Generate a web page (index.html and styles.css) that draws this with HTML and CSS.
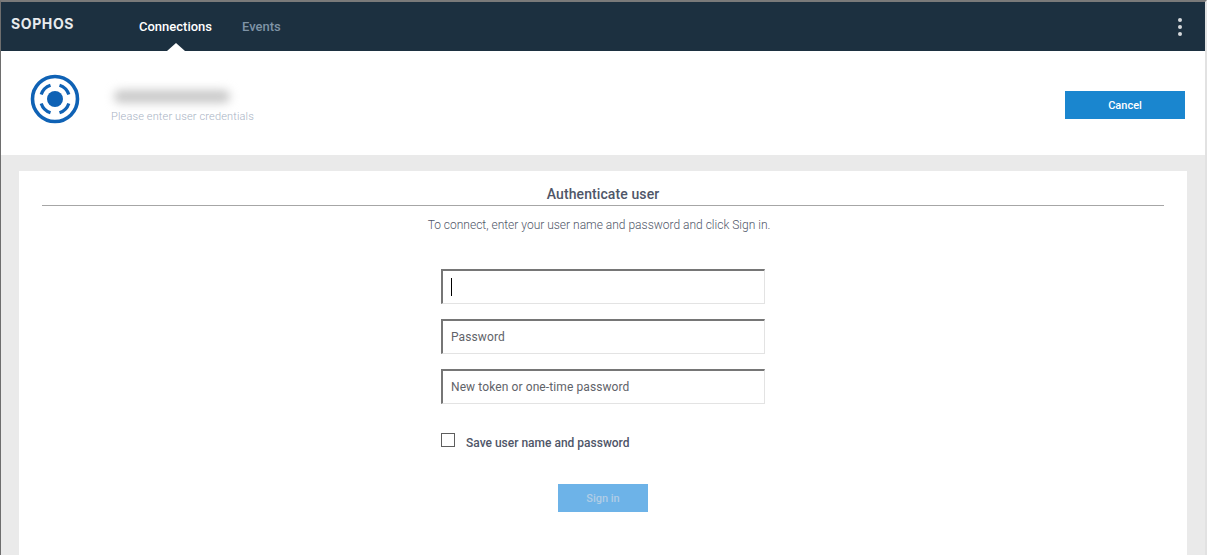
FILE: index.html
```html
<!DOCTYPE html>
<html lang="en">
<head>
<meta charset="utf-8">
<title>Sophos Connect</title>
<link rel="stylesheet" href="styles.css">
</head>
<body>
<div class="window">
  <header class="topbar">
    <div class="brand">SOPHOS</div>
    <nav class="tabs">
      <a class="tab active">Connections</a>
      <a class="tab">Events</a>
    </nav>
    <div class="kebab"><i></i><i></i><i></i></div>
  </header>
  <section class="conn">
    <svg class="conn-icon" width="50" height="50" viewBox="0 0 50 50">
      <circle cx="25" cy="25" r="22.5" fill="none" stroke="#0f62b5" stroke-width="3.6"/>
      <circle cx="25" cy="25" r="8" fill="#0f62b5"/>
      <g fill="none" stroke="#0f62b5" stroke-width="3.2">
        <path d="M11.2 20.5A14.5 14.5 0 0 1 20.5 11.2"/>
        <path d="M29.5 11.2A14.5 14.5 0 0 1 38.8 20.5"/>
        <path d="M38.8 29.5A14.5 14.5 0 0 1 29.5 38.8"/>
        <path d="M20.5 38.8A14.5 14.5 0 0 1 11.2 29.5"/>
      </g>
    </svg>
    <div class="conn-text">
      <div class="conn-name"><span class="smear"></span></div>
      <div class="conn-sub">Please enter user credentials</div>
    </div>
    <button class="btn cancel">Cancel</button>
  </section>
  <main class="content">
    <div class="card">
      <h1 class="card-title">Authenticate user</h1>
      <p class="card-intro">To connect, enter your user name and password and click Sign in.</p>
      <form class="form">
        <div class="field"><span class="caret"></span></div>
        <div class="field">Password</div>
        <div class="field">New token or one-time password</div>
        <label class="save"><span class="box"></span><span>Save user name and password</span></label>
        <button class="btn signin" type="button">Sign in</button>
      </form>
    </div>
  </main>
</div>
</body>
</html>
```
FILE: styles.css
```css
* { box-sizing: border-box; }
html, body { margin: 0; height: 100%; overflow: hidden; }
body { font-family: Roboto, "Liberation Sans", sans-serif; background: #fff; }
.window {
  height: 555px;
  display: flex;
  flex-direction: column;
  border-top: 2px solid #7a7a7a;
  border-left: 1px solid #6e6e6e;
  border-right: 2px solid #e2e2e2;
}
.topbar {
  height: 49px;
  flex: none;
  background: #1c3040;
  display: flex;
  align-items: center;
  color: #fff;
}
.brand {
  width: 138px;
  padding: 0 0 6px 10px;
  font-size: 14px;
  font-weight: 700;
  letter-spacing: 0.6px;
  color: #e8ebee;
  font-family: Inter, sans-serif;
  transform-origin: left center;
}
.tabs { display: flex; gap: 30px; height: 100%; }
.tab {
  position: relative;
  display: flex;
  align-items: center;
  font-size: 13px;
  font-weight: 500;
  color: #7f93a6;
}
.tab.active { color: #fff; }
.tab.active::after {
  content: "";
  position: absolute;
  left: 50%;
  bottom: 0;
  margin-left: -9px;
  border: 9px solid transparent;
  border-top: 0;
  border-bottom: 8px solid #fff;
}
.kebab {
  margin-left: auto;
  margin-right: 23px;
  display: flex;
  flex-direction: column;
  gap: 3px;
}
.kebab i { width: 4px; height: 4px; border-radius: 50%; background: #d5d8db; }
.conn {
  height: 104px;
  flex: none;
  background: #fff;
  display: flex;
  align-items: flex-start;
}
.conn-icon { margin: 23px 0 0 29px; flex: none; }
.conn-text { margin-left: 31px; }
.conn-name { height: 50px; padding: 39px 0 0 0; }
.smear {
  display: block;
  width: 116px;
  height: 13px;
  margin-left: 3px;
  border-radius: 6px;
  background: #c9c9c9;
  filter: blur(5px);
}
.conn-sub { margin-top: 9px; font-size: 11px; line-height: 13px; color: #a9b3c4; font-weight: 300; letter-spacing: .15px; }
.btn { border: 0; padding: 0; font-family: inherit; font-size: 11px; font-weight: 500; }
.cancel {
  margin: 40px 20px 0 auto;
  width: 120px;
  height: 28px;
  background: #1a86cf;
  color: #fff;
}
.content {
  flex: 1;
  min-height: 0;
  background: #eaeaea;
  padding: 16px 18px 0;
}
.card {
  height: 100%;
  background: #fff;
  padding: 16px 23px 0;
}
.card-title {
  margin: 0;
  height: 19px;
  border-bottom: 1px solid #a6a6a6;
  text-align: center;
  font-size: 14px;
  font-weight: 500;
  line-height: 15px;
  color: #4f5668;
  letter-spacing: .1px;
}
.card-intro {
  margin: 11px 0 0;
  text-align: center;
  font-size: 12px;
  line-height: 16px;
  font-weight: 300;
  color: #4f5668;
  padding-right: 8px;
}
.form {
  margin: 36px 0 0 399px;
  width: 324px;
  display: flex;
  flex-direction: column;
}
.field {
  height: 35px;
  margin-bottom: 15px;
  display: flex;
  align-items: center;
  padding: 0 0 0 8px;
  border-style: solid;
  border-width: 2px 1px 1px 2px;
  border-color: #767676 #e3e3e3 #e3e3e3 #767676;
  font-size: 12px;
  color: #5f6369;
  letter-spacing: .1px;
}
.caret { width: 1px; height: 18px; background: #000; }
.save {
  display: flex;
  align-items: flex-start;
  margin-top: 14px;
  font-size: 12px;
  font-weight: 500;
  line-height: 16px;
  color: #4f5668;
}
.box {
  width: 14px;
  height: 14px;
  margin-right: 11px;
  border: 1px solid #5e5e5e;
  border-width: 1.4px;
}
.save span:last-child { margin-top: 2px; }
.signin {
  margin: 33px 0 0 117px;
  width: 90px;
  height: 28px;
  background: #6db3e8;
  color: #b0cde6;
}
```
